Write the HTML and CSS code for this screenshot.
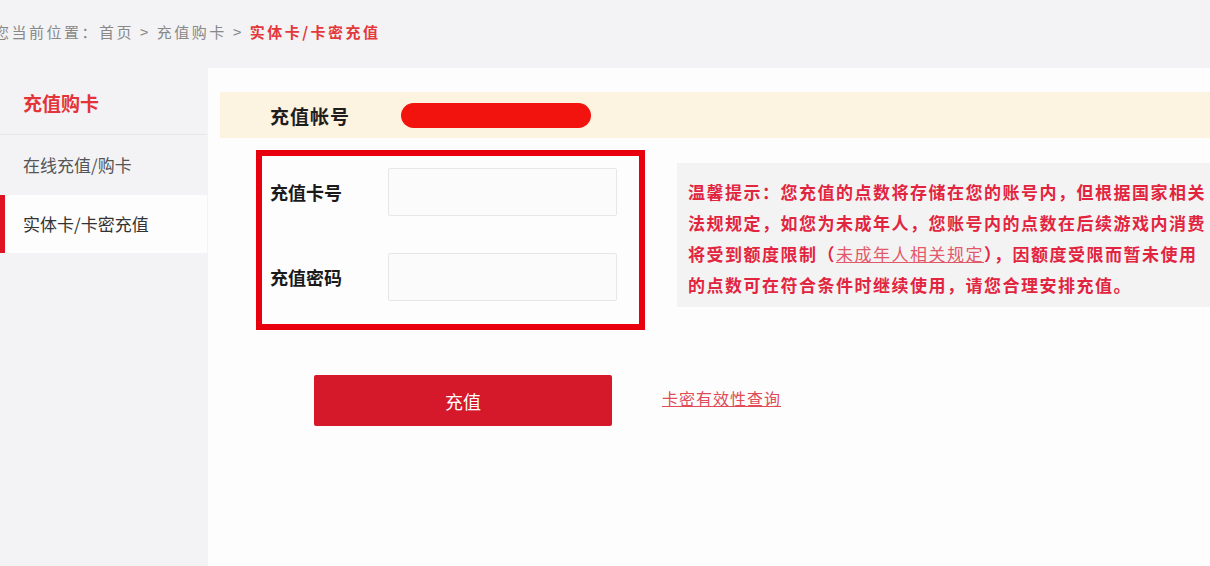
FILE: index.html
```html
<!DOCTYPE html>
<html lang="zh-CN">
<head>
    <meta charset="UTF-8">
    <title>实体卡/卡密充值</title>
    <link rel="stylesheet" href="styles.css">
</head>
<body>
<div class="crumb">
    <span>您当前位置：</span><a href="#">首页</a><span class="sep">&gt;</span><a href="#">充值购卡</a><span class="sep">&gt;</span><span class="current">实体卡/卡密充值</span>
</div>

<div class="layout">
    <div class="side">
        <div class="side-title">充值购卡</div>
        <a class="side-item" href="#">在线充值/购卡</a>
        <a class="side-item active" href="#">实体卡/卡密充值</a>
    </div>

    <div class="main">
        <div class="account">
            <span class="account-label">充值帐号</span>
            <span class="account-mask"></span>
        </div>

        <div class="form-row">
            <form class="card-box" id="cardForm">
                <div class="field">
                    <label for="cardNo">充值卡号</label>
                    <input type="text" id="cardNo" name="cardNo">
                </div>
                <div class="field">
                    <label for="cardPwd">充值密码</label>
                    <input type="password" id="cardPwd" name="cardPwd">
                </div>
            </form>

            <div class="tip">
                <p>温馨提示：您充值的点数将存储在您的账号内，但根据国家相关<br>法规规定，如您为未成年人，您账号内的点数在后续游戏内消费<br>将受到额度限制（<a href="#">未成年人相关规定</a>），因额度受限而暂未使用<br>的点数可在符合条件时继续使用，请您合理安排充值。</p>
            </div>
        </div>

        <div class="actions">
            <button type="submit" form="cardForm">充值</button>
            <a class="check-link" href="#">卡密有效性查询</a>
        </div>
    </div>
</div>
</body>
</html>
```

FILE: styles.css
```css
body {
    margin: 0;
    background: #f3f3f5;
    font-family: "Noto Sans CJK SC", "Noto Sans", sans-serif;
    color: #333;
    overflow: hidden;
}
a { text-decoration: none; color: inherit; }

.crumb {
    height: 68px;
    line-height: 64px;
    margin-left: -6px;
    font-size: 15px;
    letter-spacing: 2.5px;
    color: #888;
    white-space: nowrap;
}
.crumb .sep { margin: 0 6px; }
.crumb .current { color: #e4393c; font-weight: bold; }

.layout { display: flex; }

.side {
    width: 207px;
    flex-shrink: 0;
}
.side-title {
    height: 66px;
    line-height: 70px;
    padding-left: 23px;
    font-size: 19px;
    font-weight: bold;
    color: #e3343a;
    border-bottom: 1px solid #e7e7e9;
}
.side-item {
    display: block;
    height: 60px;
    line-height: 60px;
    padding-left: 23px;
    font-size: 17px;
    color: #555;
}
.side-item.active {
    height: 58px;
    line-height: 58px;
    padding-left: 18px;
    background: #fdfdfd;
    border-left: 5px solid #de1423;
    color: #333;
}

.main {
    flex: 1;
    min-height: 498px;
    margin-left: 1px;
    background: #fdfdfd;
    padding-top: 24px;
}

.account {
    display: flex;
    align-items: center;
    height: 46px;
    margin-left: 12px;
    padding-left: 50px;
    background: #fdf3e1;
}
.account-label {
    width: 131px;
    font-size: 19px;
    letter-spacing: 1px;
    font-weight: bold;
    color: #1e1e1e;
}
.account-mask {
    width: 190px;
    height: 25px;
    border-radius: 13px;
    background: #f2120e;
}

.form-row {
    display: flex;
    align-items: flex-start;
    margin-top: 12px;
    margin-left: 48px;
}

.card-box {
    width: 377px;
    height: 168px;
    margin: 0;
    border: 6px solid #e8000f;
    padding: 0;
}
.field {
    display: flex;
    align-items: center;
    padding-left: 8px;
}
.field:first-child { margin-top: 12px; }
.field + .field { margin-top: 37px; }
.field label {
    width: 118px;
    font-size: 18px;
    font-weight: bold;
    color: #1a1a1a;
}
.field input {
    width: 229px;
    height: 48px;
    box-sizing: border-box;
    border: 1px solid #e7e7e7;
    background: #fbfbfb;
    border-radius: 2px;
    font-size: 15px;
    padding: 0 10px;
}

.tip {
    width: 560px;
    height: 144px;
    box-sizing: border-box;
    margin-left: 32px;
    margin-top: 13px;
    padding: 13px 0 0 11px;
    background: #f4f3f4;
    flex-shrink: 0;
}
.tip p {
    margin: 0;
    white-space: nowrap;
    font-size: 17px;
    line-height: 31px;
    letter-spacing: 1.5px;
    font-weight: bold;
    color: #e2253f;
}
.tip a {
    text-decoration: underline;
    font-weight: normal;
    color: #e25a6a;
}

.actions {
    display: flex;
    align-items: center;
    margin-top: 45px;
    margin-left: 106px;
}
.actions button {
    width: 298px;
    height: 51px;
    border: none;
    border-radius: 2px;
    background: #d5192b;
    color: #fff;
    font-family: inherit;
    font-size: 18px;
    cursor: pointer;
}
.check-link {
    margin-left: 50px;
    margin-bottom: 6px;
    font-size: 16px;
    letter-spacing: 1px;
    color: #e14a58;
    text-decoration: underline;
}
```
